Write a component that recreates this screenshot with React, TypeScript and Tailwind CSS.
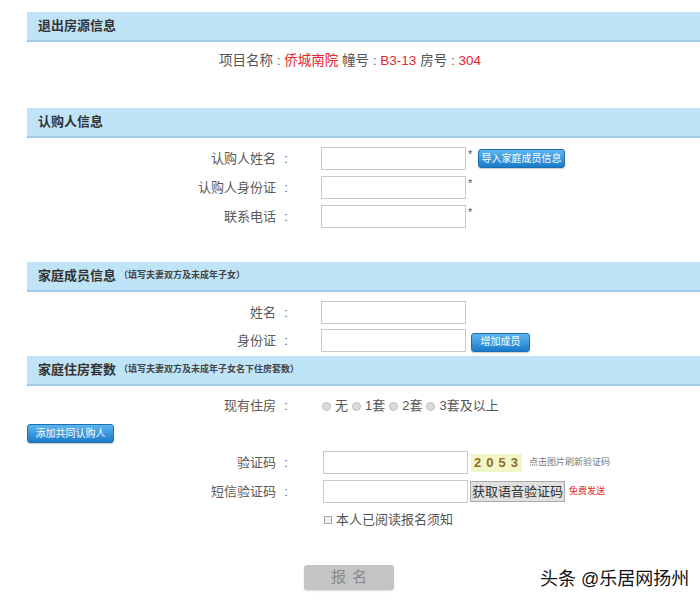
import React from "react";

const font = {
  fontFamily:
    '"Liberation Sans", "Noto Sans CJK SC", sans-serif',
};

function SectionBar({ title, note }: { title: string; note?: string }) {
  return (
    <div className="ml-[27px] h-[30px] bg-[#bfe3f7] border-b-2 border-[#9fcbe6] flex items-center pl-[11px]">
      <span className="text-[13px] font-bold text-[#333]">{title}</span>
      {note && (
        <span className="text-[9px] font-bold text-[#444] ml-[3px]">（{note}）</span>
      )}
    </div>
  );
}

function Label({ text }: { text: string }) {
  return (
    <div className="w-[296px] shrink-0 text-right text-[13px] text-[#5a5a5a]">
      {text}
      <span className="inline-block w-[20px] text-center">:</span>
    </div>
  );
}

function BlueButton({ label, className }: { label: string; className?: string }) {
  return (
    <button
      className={`h-[19px] rounded-[3px] border border-[#1d6fb0] bg-gradient-to-b from-[#5bb6ef] to-[#1a7ccb] text-white text-[10px] leading-none px-0 whitespace-nowrap shadow-[0_1px_1px_rgba(0,0,0,0.2)] ${className ?? ""}`}
    >
      {label}
    </button>
  );
}

function Field({
  label,
  star,
  children,
}: {
  label: string;
  star?: boolean;
  children?: React.ReactNode;
}) {
  return (
    <div className="flex items-center h-[23px]">
      <Label text={label} />
      <input className="ml-[25px] w-[145px] h-[23px] border border-[#c9c9c9] bg-white outline-none" />
      <span className="w-[12px] self-start text-[11px] text-[#555] pl-[2px] leading-[14px]">
        {star ? "*" : ""}
      </span>
      {children}
    </div>
  );
}

function Radio({ text }: { text: string }) {
  return (
    <span className="inline-flex items-center">
      <span className="inline-block w-[9px] h-[9px] rounded-full bg-[#dcdcdc] border border-[#bdbdbd] mr-[4px]" />
      <span className="mr-[4px]">{text}</span>
    </span>
  );
}

export default function App() {
  return (
    <div className="relative w-[700px] h-[606px] bg-white pt-3 overflow-hidden" style={font}>
      <SectionBar title="退出房源信息" />
      <p className="mt-[10px] text-center text-[13.5px] text-[#555] leading-[18px]">
        项目名称 : <span className="text-[#e3262d]">侨城南院</span> 幢号 :{" "}
        <span className="text-[#e3262d]">B3-13</span> 房号 :{" "}
        <span className="text-[#e3262d]">304</span>
      </p>

      <div className="mt-[38px]">
        <SectionBar title="认购人信息" />
      </div>
      <div className="mt-[9px] flex flex-col gap-[6px]">
        <Field label="认购人姓名" star>
          <BlueButton label="导入家庭成员信息" className="w-[87px]" />
        </Field>
        <Field label="认购人身份证" star />
        <Field label="联系电话" star />
      </div>

      <div className="mt-[34px]">
        <SectionBar title="家庭成员信息" note="填写夫妻双方及未成年子女" />
      </div>
      <div className="mt-[9px] flex flex-col gap-[5px]">
        <Field label="姓名" />
        <Field label="身份证">
          <BlueButton label="增加成员" className="w-[59px] -ml-[7px] mt-[3px]" />
        </Field>
      </div>

      <div className="mt-[4px]">
        <SectionBar title="家庭住房套数" note="填写夫妻双方及未成年子女名下住房套数" />
      </div>
      <div className="mt-[11px] flex items-center h-[18px]">
        <Label text="现有住房" />
        <div className="ml-[26px] flex items-center text-[13px] text-[#555]">
          <Radio text="无" />
          <Radio text="1套" />
          <Radio text=" 2套" />
          <Radio text=" 3套及以上" />
        </div>
      </div>

      <div className="mt-[9px] ml-[27px] flex">
        <BlueButton label="添加共同认购人" className="w-[87px]" />
      </div>

      <div className="mt-[8px] flex flex-col gap-[6px]">
        <div className="flex items-center h-[23px]">
          <Label text="验证码" />
          <input className="ml-[27px] w-[145px] h-[23px] border border-[#c9c9c9] outline-none" />
          <span className="ml-[3px] w-[51px] h-[18px] bg-[#f2f6c6] text-[#8c6d2a] text-[13px] font-bold tracking-[5px] flex items-center justify-center pl-[4px]">
            2053
          </span>
          <span className="ml-[7px] text-[9px] text-[#777]">点击图片刷新验证码</span>
        </div>
        <div className="flex items-center h-[23px]">
          <Label text="短信验证码" />
          <input className="ml-[27px] w-[145px] h-[23px] border border-[#c9c9c9] outline-none" />
          <button className="ml-[2px] h-[21px] w-[95px] bg-[#e1e1e1] border border-[#a9a9a9] text-[13px] text-[#333] leading-none">
            获取语音验证码
          </button>
          <span className="ml-[4px] text-[9px] text-[#e31e24]">免费发送</span>
        </div>
      </div>

      <div className="mt-[8px] ml-[324px] flex items-center text-[13px] text-[#555] h-[18px]">
        <span className="inline-block w-[8px] h-[8px] border border-[#aaa] bg-[#eee] mr-[4px]" />
        本人已阅读报名须知
      </div>

      <div className="mt-[36px] ml-[304px] flex">
        <button className="w-[90px] h-[25px] bg-[#c4c4c4] rounded-[3px] text-[15px] text-[#888] tracking-[6px] pl-[6px] shadow-[0_1px_2px_rgba(0,0,0,0.15)]">
          报名
        </button>
      </div>

      <div className="absolute left-[540px] top-[568px] text-[18px] text-[#111] leading-[22px]">
        头条 @乐居网扬州
      </div>
    </div>
  );
}
